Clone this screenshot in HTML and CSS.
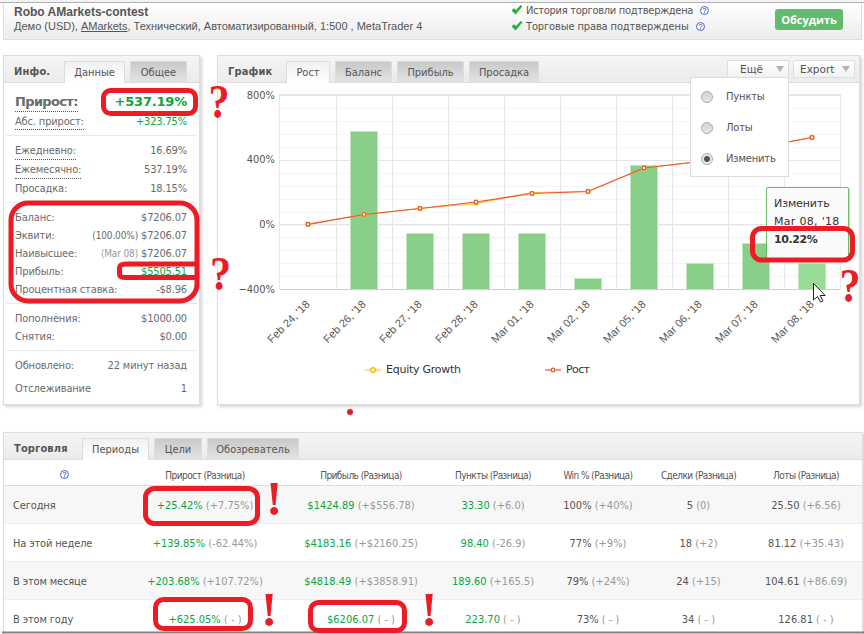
FILE: index.html
```html
<!DOCTYPE html>
<html lang="ru">
<head>
    <meta charset="UTF-8">
    <meta name="viewport" content="width=device-width, initial-scale=1.0">
    <title>Robo AMarkets-contest</title>
    <link rel="stylesheet" href="styles.css">
</head>
<body>
    <div class="top-strip"></div>

    <header class="account">
        <div class="account-info">
            <h1>Robo AMarkets-contest</h1>
            <p>Демо (USD), <a href="#">AMarkets</a>, Технический, Автоматизированный, 1:500 , MetaTrader 4</p>
        </div>
        <ul class="checks">
            <li>
                <svg class="check" viewBox="0 0 12 11"><path d="M0 6l2.500-2.500 2.500 2L10 0l2 1.500-7.500 9z"/></svg>
                <span class="check-history">История торговли подтверждена</span>
                <svg class="help" viewBox="0 0 9 9"><circle cx="4.500" cy="4.500" r="4"/><path d="M3 3.500C3 2 6 2 6 3.500 6 4.500 4.500 4.300 4.500 5.500M4.500 6.300v1"/></svg>
            </li>
            <li>
                <svg class="check" viewBox="0 0 12 11"><path d="M0 6l2.500-2.500 2.500 2L10 0l2 1.500-7.500 9z"/></svg>
                <span class="check-rights">Торговые права подтверждены</span>
                <svg class="help" viewBox="0 0 9 9"><circle cx="4.500" cy="4.500" r="4"/><path d="M3 3.500C3 2 6 2 6 3.500 6 4.500 4.500 4.300 4.500 5.500M4.500 6.300v1"/></svg>
            </li>
        </ul>
        <button class="discuss">Обсудить</button>
    </header>

    <main class="columns">
        <section class="panel info">
            <div class="panel-head">
                <h2>Инфо.</h2>
                <span class="tab active tab-data">Данные</span>
                <span class="tab tab-common">Общее</span>
            </div>
            <div class="group g1">
                <div class="row big"><span class="hint">Прирост:</span><b class="green">+537.19%</b></div>
                <div class="row"><span class="hint">Абс. прирост:</span><span class="green">+323.75%</span></div>
            </div>
            <div class="group g2">
                <div class="row"><span class="hint">Ежедневно:</span><span>16.69%</span></div>
                <div class="row"><span class="hint">Ежемесячно:</span><span>537.19%</span></div>
                <div class="row"><span>Просадка:</span><span>18.15%</span></div>
            </div>
            <div class="group">
                <div class="row"><span>Баланс:</span><span>$7206.07</span></div>
                <div class="row"><span>Эквити:</span><span><small>(100.00%)</small> $7206.07</span></div>
                <div class="row"><span>Наивысшее:</span><span><i>(Mar 08)</i> $7206.07</span></div>
                <div class="row"><span>Прибыль:</span><span class="green">$5505.51</span></div>
                <div class="row"><span>Процентная ставка:</span><span>-$8.96</span></div>
            </div>
            <div class="group">
                <div class="row"><span>Пополнения:</span><span>$1000.00</span></div>
                <div class="row"><span>Снятия:</span><span>$0.00</span></div>
            </div>
            <div class="group last">
                <div class="row"><span>Обновлено:</span><span>22 минут назад</span></div>
                <div class="row tall"><span>Отслеживание</span><span>1</span></div>
            </div>
        </section>

        <section class="panel chart">
            <div class="panel-head">
                <h2>График</h2>
                <span class="tab active tab-growth">Рост</span>
                <span class="tab tab-balance">Баланс</span>
                <span class="tab tab-profit">Прибыль</span>
                <span class="tab tab-drawdown">Просадка</span>
                <div class="tools">
                    <span class="tool more">Ещё<i class="caret"></i></span>
                    <span class="tool export">Export<i class="caret"></i></span>
                </div>
            </div>
            <svg class="plot" viewBox="218 83 641 321">
                <g class="grid-minor" id="minor"></g>
                <g class="grid-major" id="major"></g>
                <g id="bars"></g>
                <path class="axis" d="M280 289.500H840"/>
                <g class="y-labels">
                    <text x="275" y="99">800%</text>
                    <text x="275" y="163">400%</text>
                    <text x="275" y="228">0%</text>
                    <text x="275" y="293">−400%</text>
                </g>
                <g class="x-labels" id="dates"></g>
                <polyline class="equity" points="308,224.300 364,214.500 420,208.500 476,203.500 532,192.500 588,191.500 644,168 700,161.500 756,148 812,137.500"/>
                <polyline class="growth" points="308,224.300 364,214.500 420,208.500 476,202 532,193.500 588,191.500 644,168 700,161.500 756,148 812,137.500"/>
                <g id="points"></g>
                <g class="legend">
                    <path class="legend-equity" d="M365 370h16"/>
                    <circle class="dot-equity" cx="373" cy="370" r="2.300"/>
                    <text x="386" y="373" textLength="75">Equity Growth</text>
                    <path class="legend-growth" d="M545 370h16"/>
                    <circle class="dot-growth" cx="553" cy="370" r="1.800"/>
                    <text x="566" y="373" textLength="24">Рост</text>
                </g>
            </svg>
            <div class="menu">
                <label><i class="radio"></i>Пункты</label>
                <label><i class="radio"></i>Лоты</label>
                <label><i class="radio on"></i>Изменить</label>
            </div>
            <div class="tooltip">
                <span>Изменить</span>
                <span class="tip-date">Mar 08, '18</span>
                <b>10.22%</b>
            </div>
        </section>
    </main>

    <section class="panel trade">
        <div class="panel-head">
            <h2>Торговля</h2>
            <span class="tab active tab-periods">Периоды</span>
            <span class="tab tab-goals">Цели</span>
            <span class="tab tab-browser">Обозреватель</span>
        </div>
        <div class="line head">
            <span><svg class="help" viewBox="0 0 9 9"><circle cx="4.500" cy="4.500" r="4"/><path d="M3 3.500C3 2 6 2 6 3.500 6 4.500 4.500 4.300 4.500 5.500M4.500 6.300v1"/></svg></span>
            <span>Прирост (Разница)</span><span>Прибыль (Разница)</span><span>Пункты (Разница)</span><span>Win % (Разница)</span><span>Сделки (Разница)</span><span>Лоты (Разница)</span>
        </div>
        <div class="line odd">
            <span>Сегодня</span>
            <span><b>+25.42%</b> <i>(+7.75%)</i></span>
            <span><b>$1424.89</b> <i>(+$556.78)</i></span>
            <span><b>33.30</b> <i>(+6.0)</i></span>
            <span>100% <i>(+40%)</i></span>
            <span>5 <i>(0)</i></span>
            <span>25.50 <i>(+6.56)</i></span>
        </div>
        <div class="line">
            <span>На этой неделе</span>
            <span><b>+139.85%</b> <i>(-62.44%)</i></span>
            <span><b>$4183.16</b> <i>(+$2160.25)</i></span>
            <span><b>98.40</b> <i>(-26.9)</i></span>
            <span>77% <i>(+9%)</i></span>
            <span>18 <i>(+2)</i></span>
            <span>81.12 <i>(+35.43)</i></span>
        </div>
        <div class="line odd">
            <span>В этом месяце</span>
            <span><b>+203.68%</b> <i>(+107.72%)</i></span>
            <span><b>$4818.49</b> <i>(+$3858.91)</i></span>
            <span><b>189.60</b> <i>(+165.5)</i></span>
            <span>79% <i>(+24%)</i></span>
            <span>24 <i>(+15)</i></span>
            <span>104.61 <i>(+86.69)</i></span>
        </div>
        <div class="line">
            <span>В этом году</span>
            <span><b>+625.05%</b> <i>( - )</i></span>
            <span><b>$6206.07</b> <i>( - )</i></span>
            <span><b>223.70</b> <i>( - )</i></span>
            <span>73% <i>( - )</i></span>
            <span>34 <i>( - )</i></span>
            <span>126.81 <i>( - )</i></span>
        </div>
    </section>

    <!-- hand-drawn marks over the page -->
    <svg class="marks" viewBox="0 0 864 634">
        <path class="edge" d="M2 632.500H864"/>
        <rect x="103.500" y="90.500" width="92" height="23" rx="7"/>
        <rect x="11" y="203" width="186" height="98" rx="17"/>
        <path d="M196 264H126Q119.500 264 119.500 268V274Q119.500 277.500 126 277.500H196"/>
        <rect x="752.500" y="228.500" width="100" height="31.500" rx="9"/>
        <rect x="145.500" y="488.500" width="112" height="35" rx="9"/>
        <rect x="155.500" y="599.500" width="95" height="29" rx="8"/>
        <rect x="310.500" y="602.500" width="94" height="28" rx="8"/>
        <circle cx="350" cy="412" r="3"/>
        <g class="signs">
            <text transform="translate(208.500 117.500) scale(0.86 1)">?</text>
            <text transform="translate(210 289.500) scale(0.86 1)">?</text>
            <text transform="translate(839.500 301.500) scale(0.86 1)">?</text>
            <text x="266" y="515">!</text>
            <text x="261" y="626">!</text>
            <text x="421" y="626">!</text>
        </g>
        <path class="cursor" d="M813.500 283.500v16.500l4-3.500 3 5.500 2.500-1.200-2.800-5.300h5z"/>
    </svg>

    <script>
        const dates = ['Feb 24', 'Feb 26', 'Feb 27', 'Feb 28', 'Mar 01', 'Mar 02', 'Mar 05', 'Mar 06', 'Mar 07', 'Mar 08'];
        const tops = [null, 131.5, 233.5, 233.5, 233.5, 278.5, 165.5, 263.5, 243.5, 263.5];
        const growth = [224.3, 214.5, 208.5, 202, 193.5, 191.5, 168, 161.5, 148, 137.5];
        const base = 289;
        const step = 56;

        let major = '';
        for (let i = 0; i <= 10; i++) {
            const x = Math.round(279.5 + i * step) + 0.5 - (i ? 0 : 1);
            major += `<path d="M${x} 95V289"/>`;
        }
        major += '<path class="top-line" d="M279 95H841"/><path d="M279 160.5H841M279 224.5H841"/>';
        document.getElementById('major').innerHTML = major;

        let minor = '';
        for (let i = 1; i < 15; i++) {
            const y = Math.round(95 + i * 12.95) + 0.5;
            minor += `<path d="M280 ${y}H840"/>`;
        }
        document.getElementById('minor').innerHTML = minor;

        document.getElementById('bars').innerHTML = tops.map((top, i) => top === null ? '' :
            `<rect class="bar${i === 9 ? ' hover' : ''}" x="${294.5 + i * step}" y="${top}" width="27" height="${base - top + 0.5}"/>`
        ).join('');

        document.getElementById('dates').innerHTML = dates.map((d, i) =>
            `<text transform="translate(${310.5 + i * step} 305) rotate(-45)">${d}, '18</text>`
        ).join('');

        document.getElementById('points').innerHTML = growth.map((y, i) =>
            `<circle class="dot-equity" cx="${308 + i * step}" cy="${y + (i === 3 ? 1 : 0)}" r="2"/><circle class="dot-growth" cx="${308 + i * step}" cy="${y}" r="1.8"/>`
        ).join('');
    </script>
</body>
</html>
```

FILE: styles.css
```css
* {
    box-sizing: border-box;
}

body {
    margin: 0;
    width: 864px;
    height: 634px;
    overflow: hidden;
    position: relative;
    background: #fff;
    color: #555;
    font: 11px "DejaVu Sans Condensed", "DejaVu Sans", sans-serif;
}

h1, h2, p, ul {
    margin: 0;
    padding: 0;
}

i {
    font-style: normal;
}

.top-strip {
    height: 3px;
    background: #f3f3f3;
    border-bottom: 1px solid #b0b0b0;
}

/* header */
.account {
    display: flex;
    width: 859px;
    height: 37px;
    margin-left: 3px;
    border: 1px solid #ddd;
    border-top: 0;
    background: linear-gradient(#fff, #ececec);
}

.account-info {
    width: 507px;
    padding: 2px 0 0 10px;
    font-family: "Liberation Sans", sans-serif;
    white-space: nowrap;
}

.account h1 {
    font-size: 12px;
    line-height: 15px;
}

.account p {
    font-size: 11px;
    line-height: 13px;
}

.account a {
    color: inherit;
}

.checks {
    width: 264px;
    margin-top: -1px;
    list-style: none;
}

.checks li {
    display: flex;
    align-items: center;
    height: 16px;
    white-space: nowrap;
}

.check-history { letter-spacing: -0.28px; }
.check-rights { letter-spacing: -0.12px; }

.check {
    width: 12px;
    height: 10px;
    margin-right: 3px;
    fill: #2aae3c;
}

.help {
    width: 9px;
    height: 9px;
    margin-left: 7px;
    fill: #fff;
    stroke: #4562d0;
    stroke-width: 1;
}

.discuss {
    width: 68px;
    height: 21px;
    margin-top: 6px;
    padding: 0;
    border: 0;
    border-radius: 3px;
    background: #63bb6e;
    color: #fff;
    font: bold 11px "Open Sans", sans-serif;
}

/* panels */
.columns {
    display: flex;
    gap: 17px;
    margin: 15px 0 0 3px;
}

.panel {
    position: relative;
    border: 1px solid #ddd;
    background: #fff;
    box-shadow: 2px 2px 3px rgba(0, 0, 0, 0.17);
}

.info {
    width: 197px;
    height: 350px;
}

.chart {
    width: 643px;
    height: 350px;
}

.panel-head {
    display: flex;
    align-items: flex-end;
    height: 27px;
    border-bottom: 1px solid #ddd;
    background: linear-gradient(#f5f5f5, #ebebeb);
}

.panel-head h2 {
    align-self: center;
    padding: 4px 0 0 10px;
    font-size: 11px;
    letter-spacing: 0.15px;
    white-space: nowrap;
}

.info h2 { width: 60px; }
.chart h2 { width: 68px; }
.trade h2 { width: 78px; }

.tab {
    height: 21px;
    margin-right: 5px;
    border: 1px solid #ddd;
    border-bottom: 0;
    background: linear-gradient(#c9c9c9, #e3e3e3);
    font-size: 11px;
    line-height: 21px;
    text-align: center;
    white-space: nowrap;
}

.tab.active {
    height: 22px;
    margin-bottom: -1px;
    background: linear-gradient(#f1f1f1, #fff);
}

.tab-data { width: 61px; }
.tab-common { width: 57px; }
.tab-growth { width: 44px; }
.tab-balance { width: 57px; }
.tab-profit { width: 67px; }
.tab-drawdown { width: 70px; }
.tab-periods { width: 67px; }
.tab-goals { width: 48px; }
.tab-browser { width: 92px; }

.tools {
    display: flex;
    gap: 4px;
    margin: 0 4px 4px auto;
    font: 10.5px "DejaVu Sans", sans-serif;
}

.tool {
    display: flex;
    align-items: center;
    justify-content: space-between;
    width: 62px;
    height: 18px;
    padding: 0 4px 0 6px;
    border: 1px solid #ddd;
    background: linear-gradient(#fff, #f2f2f2);
}

.more {
    padding-left: 12px;
}

.caret {
    border: 4px solid transparent;
    border-top: 6px solid #b3b3b3;
    border-bottom: 0;
}

/* info rows */
.group {
    margin: 0 2px;
    padding: 5px 10px 5px 9px;
    border-bottom: 1px solid #e9e9e9;
    color: #6b6b6b;
}

.g1 { padding-top: 7px; }
.g2 { padding-bottom: 4px; }
.last { border-bottom: 0; }

.row {
    display: flex;
    justify-content: space-between;
    height: 18px;
    line-height: 20px;
    letter-spacing: -0.15px;
    white-space: nowrap;
}

.g2 .row { height: 19px; line-height: 20px; }
.row.big { height: 22px; font: bold 13px/23px "DejaVu Sans", sans-serif; letter-spacing: -0.2px; }
.row.big .hint { letter-spacing: -0.65px; }
.row.tall { height: 28px; line-height: 30px; }
.row i { color: #999; }
.row i, .row small { font-size: 10px; }

.hint {
    height: 100%;
    border-bottom: 1px dotted #555;
}

.green {
    color: #0aa53c;
}

/* chart */
.plot {
    display: block;
    width: 641px;
    height: 321px;
    font-family: "DejaVu Sans", sans-serif;
    font-size: 11px;
}

.grid-minor path { stroke: #f5f5f5; }
.grid-major path { stroke: #e6e6e6; }
.grid-major .top-line { stroke-width: 2; }
.axis { stroke: #c0d0e0; }

.bar {
    fill: #8acf87;
    stroke: #c0e5bf;
}

.bar.hover { fill: #96dc93; }

.y-labels {
    fill: #555;
    font-family: "DejaVu Sans Condensed", sans-serif;
    text-anchor: end;
}

.x-labels {
    fill: #555;
    font-family: "Liberation Sans", sans-serif;
    font-size: 11px;
    text-anchor: end;
}

.equity, .growth {
    fill: none;
    stroke: #fabf18;
    stroke-width: 1.2;
}

.growth { stroke: #f0503c; }

.dot-equity {
    fill: #fff;
    stroke: #fabf18;
    stroke-width: 1.6;
}

.dot-growth {
    fill: #fff;
    stroke: #f0503c;
    stroke-width: 1.3;
}

.legend text { fill: #333; }
.legend-equity { stroke: #fddd80; stroke-width: 2; }
.legend-growth { stroke: #f59a92; stroke-width: 2; }

.menu {
    position: absolute;
    top: 21px;
    left: 472px;
    width: 99px;
    height: 100px;
    padding: 3px 0 0 10px;
    border: 1px solid #ddd;
    background: #fff;
    font: 10px "DejaVu Sans", sans-serif;
    letter-spacing: -0.2px;
}

.menu label {
    display: flex;
    align-items: center;
    height: 31px;
}

.radio {
    width: 12px;
    height: 12px;
    margin-right: 13px;
    border: 1px solid #aaa;
    border-radius: 50%;
    background: linear-gradient(#d3d3d3, #e8e8e8);
}

.radio.on {
    background: radial-gradient(#555 0 2.500px, #e8e8e8 3.500px);
}

.tooltip {
    position: absolute;
    top: 131px;
    left: 548px;
    display: flex;
    flex-direction: column;
    width: 83px;
    height: 72px;
    padding: 7px 0 0 7px;
    border: 1px solid #6dbb6a;
    border-radius: 2px;
    background: rgba(249, 249, 249, 0.9);
    box-shadow: 1px 1px 2px rgba(0, 0, 0, 0.2);
    color: #333;
    font: 11px/18px "DejaVu Sans", sans-serif;
    letter-spacing: -0.1px;
    white-space: nowrap;
}

.tip-date { letter-spacing: 0.3px; }
.tooltip b { letter-spacing: -0.4px; }

/* trading table */
.trade {
    width: 860px;
    height: 210px;
    margin: 27px 0 0 3px;
}

.line {
    display: grid;
    grid-template-columns: 121px 160px 152px 112px 98px 103px 112px;
    align-items: center;
    height: 38px;
    padding-top: 2px;
    border-bottom: 1px solid #eee;
    text-align: center;
    white-space: nowrap;
}

.line.head {
    height: 26px;
    border-bottom-color: #ddd;
    padding-top: 5px;
    font-size: 10px;
    letter-spacing: -0.55px;
}

.head .help {
    margin: 0;
}

.line.odd { background: #f7f7f7; }

.line:not(.head) span:first-child {
    padding-left: 9px;
    letter-spacing: -0.15px;
    text-align: left;
}

.line b {
    color: #0aa53c;
    font-weight: normal;
}

.line i { color: #999; }

/* marks */
.marks {
    position: absolute;
    top: 0;
    left: 0;
    width: 864px;
    height: 634px;
}

.marks rect, .marks path {
    fill: none;
    stroke: #ed1c24;
    stroke-width: 5;
}

.marks circle, .signs {
    fill: #ed1c24;
}

.signs {
    font: bold 49px "Liberation Serif", serif;
}

.marks .edge {
    stroke: #808080;
    stroke-width: 2;
}

.marks .cursor {
    fill: #fff;
    stroke: #222;
    stroke-width: 1;
}
```
